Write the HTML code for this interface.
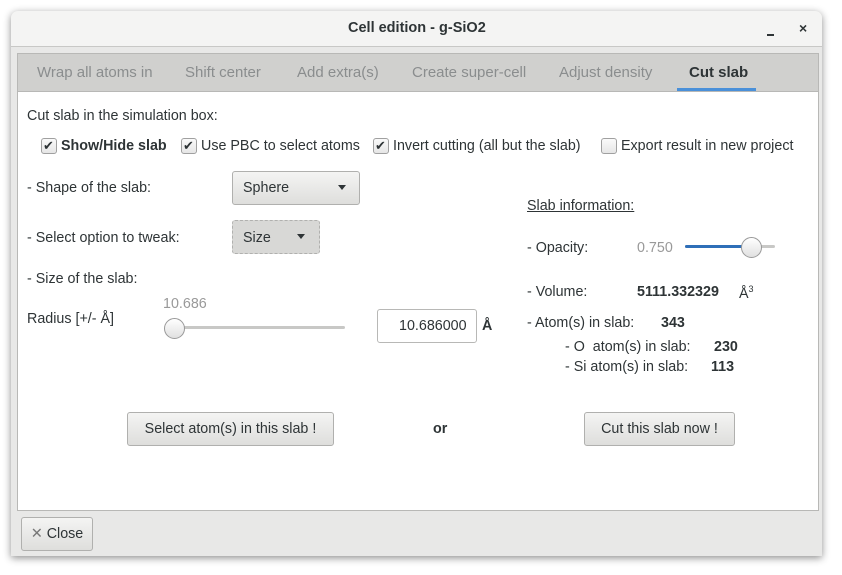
<!DOCTYPE html><html><head><style>
body{margin:0;width:842px;height:575px;background:#fff;font-family:"Liberation Sans",sans-serif;font-size:14.3px;color:#2e3436;position:relative;overflow:hidden}
.a{position:absolute;white-space:nowrap}
.win{position:absolute;left:11px;top:11px;width:811px;height:545px;background:#e8e8e7;border-radius:7px 7px 0 0;box-shadow:0 2px 8px rgba(0,0,0,.45)}
.title{position:absolute;left:11px;top:11px;width:811px;height:35px;background:#f4f4f3;border-bottom:1px solid #c8c8c6;border-radius:7px 7px 0 0}
.nb{position:absolute;left:17px;top:53px;width:800px;height:456px;border:1px solid #b8b8b6;background:#fff}
.tabs{position:absolute;left:0;top:0;width:800px;height:37px;background:#d0d0ce;border-bottom:1px solid #b8b8b6}
.tab{position:absolute;top:10px;color:#8a8d8e;font-size:15px}
.cb{position:absolute;width:14px;height:14px;border:1px solid #a0a0a0;border-radius:3px;background:linear-gradient(#fafafa,#e6e6e6)}
.btn{position:absolute;border:1px solid #b0b0ae;border-radius:3px;background:linear-gradient(#f4f4f3,#dededc);text-align:center;box-sizing:border-box}
.tri{position:absolute;width:0;height:0;border-left:4.5px solid transparent;border-right:4.5px solid transparent;border-top:5px solid #2e3436}
.ck{position:absolute;font-size:13px;line-height:14px}
</style></head><body>
<div class="win"></div>
<div class="title"></div>
<div class="a" style="left:348px;top:20px;font-size:14.5px;font-weight:bold">Cell edition - g-SiO2</div>
<div class="a" style="left:767px;top:34px;width:7px;height:2px;background:#2e3436"></div>
<div class="a" style="left:799px;top:20px;font-size:14px;font-weight:bold">×</div>
<div class="nb">
<div class="tabs">
<div class="tab" style="left:19px">Wrap all atoms in</div>
<div class="tab" style="left:167px">Shift center</div>
<div class="tab" style="left:279px">Add extra(s)</div>
<div class="tab" style="left:394px">Create super-cell</div>
<div class="tab" style="left:541px">Adjust density</div>
<div class="tab" style="left:671px;color:#2e3436;font-weight:bold">Cut slab</div>
<div class="a" style="left:659px;top:34px;width:79px;height:3px;background:#4a90d9"></div>
</div>
</div>
<div class="a" style="left:27px;top:108px">Cut slab in the simulation box:</div>
<div class="cb" style="left:41px;top:138px"></div><div class="ck" style="left:43px;top:139px">✔</div>
<div class="a" style="left:61px;top:138px;font-weight:bold">Show/Hide slab</div>
<div class="cb" style="left:181px;top:138px"></div><div class="ck" style="left:183px;top:139px">✔</div>
<div class="a" style="left:201px;top:138px">Use PBC to select atoms</div>
<div class="cb" style="left:373px;top:138px"></div><div class="ck" style="left:375px;top:139px">✔</div>
<div class="a" style="left:393px;top:138px">Invert cutting (all but the slab)</div>
<div class="cb" style="left:601px;top:138px"></div>
<div class="a" style="left:621px;top:138px">Export result in new project</div>
<div class="a" style="left:27px;top:180px">- Shape of the slab:</div>
<div class="btn" style="left:232px;top:171px;width:128px;height:34px"></div>
<div class="a" style="left:243px;top:180px">Sphere</div><div class="tri" style="left:338px;top:185px"></div>
<div class="a" style="left:27px;top:230px">- Select option to tweak:</div>
<div class="btn" style="left:232px;top:220px;width:88px;height:34px;border-style:dashed;background:#d8d8d6"></div>
<div class="a" style="left:243px;top:230px">Size</div><div class="tri" style="left:297px;top:234px"></div>
<div class="a" style="left:27px;top:271px">- Size of the slab:</div>
<div class="a" style="left:163px;top:296px;color:#999">10.686</div>
<div class="a" style="left:27px;top:311px">Radius [+/- Å]</div>
<div class="a" style="left:175px;top:326px;width:170px;height:3px;background:#c8c8c6;border-radius:2px"></div>
<div class="a" style="left:164px;top:318px;width:19px;height:19px;border:1px solid #999;border-radius:50%;background:linear-gradient(#fff,#e0e0e0)"></div>
<div class="a" style="left:377px;top:309px;width:98px;height:32px;border:1px solid #b8b8b6;border-radius:3px;background:#fff"></div>
<div class="a" style="left:399px;top:318px">10.686000</div>
<div class="a" style="left:482px;top:318px;font-weight:bold">Å</div>
<div class="a" style="left:527px;top:198px;text-decoration:underline">Slab information:</div>
<div class="a" style="left:527px;top:240px">- Opacity:</div>
<div class="a" style="left:637px;top:240px;color:#999">0.750</div>
<div class="a" style="left:685px;top:245px;width:90px;height:3px;background:#c8c8c6;border-radius:2px"></div>
<div class="a" style="left:685px;top:245px;width:60px;height:3px;background:#2f6fb8;border-radius:2px"></div>
<div class="a" style="left:741px;top:237px;width:19px;height:19px;border:1px solid #999;border-radius:50%;background:linear-gradient(#fff,#e0e0e0)"></div>
<div class="a" style="left:527px;top:284px">- Volume:</div>
<div class="a" style="left:637px;top:284px;font-weight:bold">5111.332329</div>
<div class="a" style="left:739px;top:284px">Å<sup style="font-size:9px">3</sup></div>
<div class="a" style="left:527px;top:315px">- Atom(s) in slab:</div>
<div class="a" style="left:661px;top:315px;font-weight:bold">343</div>
<div class="a" style="left:565px;top:339px">- O &nbsp;atom(s) in slab:</div>
<div class="a" style="left:714px;top:339px;font-weight:bold">230</div>
<div class="a" style="left:565px;top:359px">- Si atom(s) in slab:</div>
<div class="a" style="left:711px;top:359px;font-weight:bold">113</div>
<div class="btn" style="left:127px;top:412px;width:207px;height:34px;line-height:32px">Select atom(s) in this slab !</div>
<div class="a" style="left:433px;top:421px;font-weight:bold">or</div>
<div class="btn" style="left:584px;top:412px;width:151px;height:34px;line-height:32px">Cut this slab now !</div>
<div class="btn" style="left:21px;top:517px;width:72px;height:34px;line-height:32px"><span style="color:#777">✕</span> Close</div>
</body></html>
